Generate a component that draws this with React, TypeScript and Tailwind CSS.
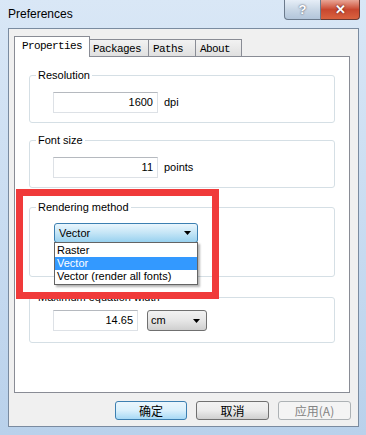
import React from "react";

const sans = "font-['Liberation_Sans',Arial,sans-serif]";

function Group({
  label,
  className,
  children,
}: {
  label: string;
  className: string;
  children: React.ReactNode;
}) {
  return (
    <fieldset className={`mx-[14px] rounded-[3px] border border-[#d5dfe5] ${className}`}>
      <legend className="ml-[6px] px-[2px] text-[11px] leading-[14px] text-black">{label}</legend>
      {children}
    </fieldset>
  );
}

function NumberBox({ value, width }: { value: string; width: string }) {
  return (
    <div
      className={`${width} h-[21px] border border-[#dde1e6] border-t-[#b5b9bf] bg-white pr-[4px] text-right text-[11px] leading-[19px] text-black`}
    >
      {value}
    </div>
  );
}

function Arrow() {
  return (
    <svg width="7" height="4" viewBox="0 0 7 4">
      <path d="M0 0h7L3.5 4z" fill="#000" />
    </svg>
  );
}

export default function App() {
  return (
    <div
      className={`relative flex h-[435px] w-[366px] flex-col overflow-hidden bg-gradient-to-b from-[#d9e7f6] via-[#c9dcf1] to-[#b9d1eb] ${sans}`}
    >
      {/* title bar */}
      <div className="h-[28px] shrink-0 pl-[8px] pt-[7px] text-[12px] leading-[14px] text-black">
        Preferences
      </div>

      {/* caption buttons */}
      <div className="absolute right-[6px] top-0 flex h-[20px]">
        <div className="flex w-[37px] items-center justify-center rounded-bl-[4px] border border-t-0 border-[#6b7a8c] bg-gradient-to-b from-[#e6eef7] via-[#c9d7e6] to-[#b2c5da] text-[13px] font-bold leading-none text-white [text-shadow:0_0_2px_#334]">
          ?
        </div>
        <div className="flex w-[39px] items-center justify-center rounded-br-[4px] border border-l-0 border-t-0 border-[#6b3a33] bg-gradient-to-b from-[#e8a596] via-[#c8472f] to-[#d9623f] text-[13px] font-bold leading-none text-white [text-shadow:0_0_2px_#411]">
          ✕
        </div>
      </div>

      {/* client area */}
      <div className="mb-[8px] ml-[8px] mr-[7px] flex flex-1 flex-col border border-[#7a8ba0] bg-[#f0f0f0] pl-[5px] pt-[7px]">
        {/* tabs */}
        <div className="flex h-[20px] items-end font-['Liberation_Mono',monospace] text-[11px] tracking-[-0.6px] text-black">
          <div className="relative z-10 -mb-px h-[21px] w-[76px] border border-b-0 border-[#898c95] bg-white pl-[7px] pt-[3px] leading-[13px]">
            Properties
          </div>
          <div className="h-[17px] w-[59px] border-r border-t border-[#898c95] bg-gradient-to-b from-[#f2f2f2] to-[#e0e0e0] pl-[3px] pt-[3px] leading-[13px]">
            Packages
          </div>
          <div className="h-[17px] w-[47px] border-r border-t border-[#898c95] bg-gradient-to-b from-[#f2f2f2] to-[#e0e0e0] pl-[4px] pt-[3px] leading-[13px]">
            Paths
          </div>
          <div className="h-[17px] w-[46px] border-r border-t border-[#898c95] bg-gradient-to-b from-[#f2f2f2] to-[#e0e0e0] pl-[4px] pt-[3px] leading-[13px]">
            About
          </div>
        </div>

        {/* panel */}
        <div className="h-[337px] w-[336px] border border-[#898c95] bg-white">
          <Group label="Resolution" className="mt-[11px] pb-[9px] pt-[10px]">
            <div className="flex items-center gap-[6px] pl-[23px] text-[11px]">
              <NumberBox value="1600" width="w-[105px]" />
              <span>dpi</span>
            </div>
          </Group>

          <Group label="Font size" className="mt-[10px] pb-[9px] pt-[10px]">
            <div className="flex items-center gap-[6px] pl-[23px] text-[11px]">
              <NumberBox value="11" width="w-[105px]" />
              <span>points</span>
            </div>
          </Group>

          <Group label="Rendering method" className="mt-[12px] pb-[33px] pt-[9px]">
            <div className="pl-[24px]">
              <div className="relative h-[20px] w-[144px]">
                <div className="flex h-full items-center justify-between rounded-[3px] border border-[#3c7fb1] bg-gradient-to-b from-[#eaf6fd] via-[#c4e5f6] to-[#98d1ef] pl-[4px] pr-[6px] text-[11px] leading-[13px]">
                  <span>Vector</span>
                  <Arrow />
                </div>
                {/* open list */}
                <div className="absolute left-0 top-[19px] z-20 w-[144px] border border-[#646464] bg-white py-px text-[11px] leading-[13px] text-black shadow-[2px_2px_2px_rgba(0,0,0,0.3)]">
                  <div className="pl-[2px]">Raster</div>
                  <div className="bg-[#3399ff] pl-[2px] text-white">Vector</div>
                  <div className="pl-[2px]">Vector (render all fonts)</div>
                </div>
              </div>
            </div>
          </Group>

          <Group label="Maximum equation width" className="mt-[13px] pb-[11px] pt-[6px]">
            <div className="flex items-center gap-[9px] pl-[23px] text-[11px]">
              <NumberBox value="14.65" width="w-[85px]" />
              <div className="flex h-[21px] w-[60px] items-center justify-between rounded-[3px] border border-[#707070] bg-gradient-to-b from-[#f2f2f2] via-[#e6e6e6] to-[#cfcfcf] pl-[3px] pr-[6px] leading-[13px]">
                <span>cm</span>
                <Arrow />
              </div>
            </div>
          </Group>
        </div>

        {/* dialog buttons */}
        <div className="mt-[8px] flex w-[337px] justify-end gap-[9px] font-['Noto_Sans_CJK_SC',sans-serif] text-[12px]">
          <div className="flex h-[19px] w-[72px] items-center justify-center rounded-[3px] border border-[#3c7fb1] bg-gradient-to-b from-[#eaf6fd] via-[#d9f0fc] to-[#a7d9f5] leading-none text-black">
            确定
          </div>
          <div className="flex h-[19px] w-[73px] items-center justify-center rounded-[3px] border border-[#707070] bg-gradient-to-b from-[#f2f2f2] via-[#ebebeb] to-[#cfcfcf] leading-none text-black">
            取消
          </div>
          <div className="flex h-[19px] w-[73px] items-center justify-center rounded-[3px] border border-[#adb2b5] bg-[#f4f4f4] leading-none text-[#838383]">
            应用(A)
          </div>
        </div>
      </div>

      {/* red annotation box */}
      <div className="pointer-events-none absolute left-[16px] top-[189px] z-30 h-[110px] w-[203px] border-[7px] border-[#f03a3a]" />
    </div>
  );
}
